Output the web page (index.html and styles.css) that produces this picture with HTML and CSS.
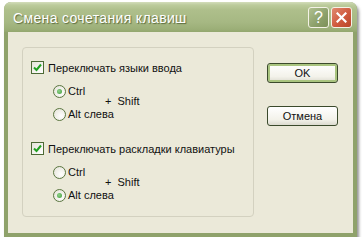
FILE: index.html
```html
<!DOCTYPE html>
<html lang="ru">
<head>
    <meta charset="UTF-8">
    <title>Смена сочетания клавиш</title>
    <link rel="stylesheet" href="styles.css">
</head>
<body>
    <div class="window">
        <!-- TITLE BAR -->
        <div class="titlebar">
            <span class="title">Смена сочетания клавиш</span>
            <div class="caption-buttons">
                <span class="cap-btn help">?</span>
                <span class="cap-btn close">
                    <svg width="11" height="11" viewBox="0 0 11 11"><path d="M1.5 1.5 L9.5 9.5 M9.5 1.5 L1.5 9.5" stroke="#fff" stroke-width="2.2" stroke-linecap="square"/></svg>
                </span>
            </div>
        </div>

        <!-- CLIENT AREA -->
        <div class="client">
            <div class="group">
                <div class="check">
                    <span class="box"><svg width="9" height="9" viewBox="0 0 9 9"><path d="M1 4.5 L3.5 7 L8 1.5" fill="none" stroke="#21a121" stroke-width="2"/></svg></span>
                    <span>Переключать языки ввода</span>
                </div>
                <div class="keys">
                    <div class="radio ctrl"><span class="dot on"></span><span>Ctrl</span></div>
                    <span class="shift">+&nbsp;&nbsp;Shift</span>
                    <div class="radio alt"><span class="dot"></span><span>Alt слева</span></div>
                </div>

                <div class="check second">
                    <span class="box"><svg width="9" height="9" viewBox="0 0 9 9"><path d="M1 4.5 L3.5 7 L8 1.5" fill="none" stroke="#21a121" stroke-width="2"/></svg></span>
                    <span>Переключать раскладки клавиатуры</span>
                </div>
                <div class="keys">
                    <div class="radio ctrl"><span class="dot"></span><span>Ctrl</span></div>
                    <span class="shift">+&nbsp;&nbsp;Shift</span>
                    <div class="radio alt"><span class="dot on"></span><span>Alt слева</span></div>
                </div>
            </div>

            <div class="buttons">
                <div class="btn default">OK</div>
                <div class="btn">Отмена</div>
            </div>
        </div>
    </div>
</body>
</html>
```

FILE: styles.css
```css
/* === PAGE === */
body {
    margin: 0;
    padding: 2px 0 0 4px;
    background-color: #ffffff;
    font-family: 'Liberation Sans', Arial, sans-serif;
    font-size: 11px;
    font-weight: normal;
    color: #111;
}

/* === WINDOW FRAME === */
.window {
    width: 353px;
    height: 235px;
    box-sizing: border-box;
    display: flex;
    flex-direction: column;
    background-color: #8fa26b;
    border-radius: 7px 7px 0 0;
    padding: 0 4px 4px 4px;
    box-shadow: 2px 3px 3px rgba(60, 60, 60, 0.55);
}

.titlebar {
    height: 30px;
    margin: 0 -4px;
    padding: 0 5px 0 9px;
    display: flex;
    align-items: center;
    justify-content: space-between;
    border-radius: 7px 7px 0 0;
    background: linear-gradient(to bottom, #d3ddbb 0px, #bccb9c 3px, #aebf8b 8px, #a6b883 20px, #9caf78 27px, #93a76f 30px);
}

.title {
    color: #fff;
    font-size: 14px;
    letter-spacing: 0.35px;
    text-shadow: 1px 1px 1px #5b6b3e;
    margin-top: 1px;
}

.caption-buttons {
    display: flex;
    gap: 2px;
    margin-top: 1px;
}

.cap-btn {
    width: 21px;
    height: 21px;
    box-sizing: border-box;
    border: 1px solid #f4f2e6;
    border-radius: 3px;
    display: flex;
    align-items: center;
    justify-content: center;
}

.help {
    background: linear-gradient(135deg, #b0c090, #8ca06a 60%, #7c9058);
    color: #fff;
    font-size: 16px;
}

.close {
    background: linear-gradient(135deg, #e08a70, #d05a3e 55%, #b84628);
}

/* === CLIENT === */
.client {
    flex: 1;
    display: flex;
    background-color: #ebe9d9;
    padding: 15px 0 0 14px;
}

.group {
    width: 232px;
    height: 170px;
    box-sizing: border-box;
    border: 1px solid #d3d1c0;
    border-radius: 4px;
    padding: 13px 0 0 8px;
    display: flex;
    flex-direction: column;
}

.check {
    display: flex;
    align-items: center;
    height: 13px;
}

.check.second {
    margin-top: 22px;
}

.box {
    width: 13px;
    height: 13px;
    box-sizing: border-box;
    border: 1px solid #4d6a35;
    background: linear-gradient(135deg, #e6e4da, #ffffff);
    margin-right: 4px;
    display: flex;
    align-items: center;
    justify-content: center;
}

/* === RADIO BLOCK === */
.keys {
    display: grid;
    grid-template-columns: 52px auto;
    grid-template-rows: 12px 11px 12px;
    margin: 11px 0 0 22px;
}

.radio {
    display: flex;
    align-items: center;
}

.radio.ctrl {
    grid-row: 1;
    grid-column: 1;
}

.radio.alt {
    grid-row: 3;
    grid-column: 1 / 3;
}

.shift {
    grid-row: 1 / 3;
    grid-column: 2;
    align-self: end;
    line-height: 12px;
    margin-bottom: 1px;
}

.dot {
    width: 13px;
    height: 13px;
    box-sizing: border-box;
    border: 1px solid #5a7640;
    border-radius: 50%;
    background: radial-gradient(circle at 65% 65%, #ffffff, #e2e0d4);
    margin-right: 2px;
    display: flex;
    align-items: center;
    justify-content: center;
}

.dot.on::after {
    content: '';
    width: 5px;
    height: 5px;
    border-radius: 50%;
    background: radial-gradient(circle at 40% 40%, #8fd38a, #3d9a37);
}

/* === BUTTONS === */
.buttons {
    display: flex;
    flex-direction: column;
    gap: 23px;
    margin-left: 13px;
    padding-top: 16px;
}

.btn {
    width: 71px;
    height: 20px;
    box-sizing: border-box;
    border: 1px solid #3b4a2c;
    border-radius: 3px;
    background: linear-gradient(to bottom, #ffffff, #f3f2ea 70%, #dcdbd0);
    display: flex;
    align-items: center;
    justify-content: center;
}

.btn.default {
    box-shadow: inset 0 0 0 2px #a9c47f;
}
```
